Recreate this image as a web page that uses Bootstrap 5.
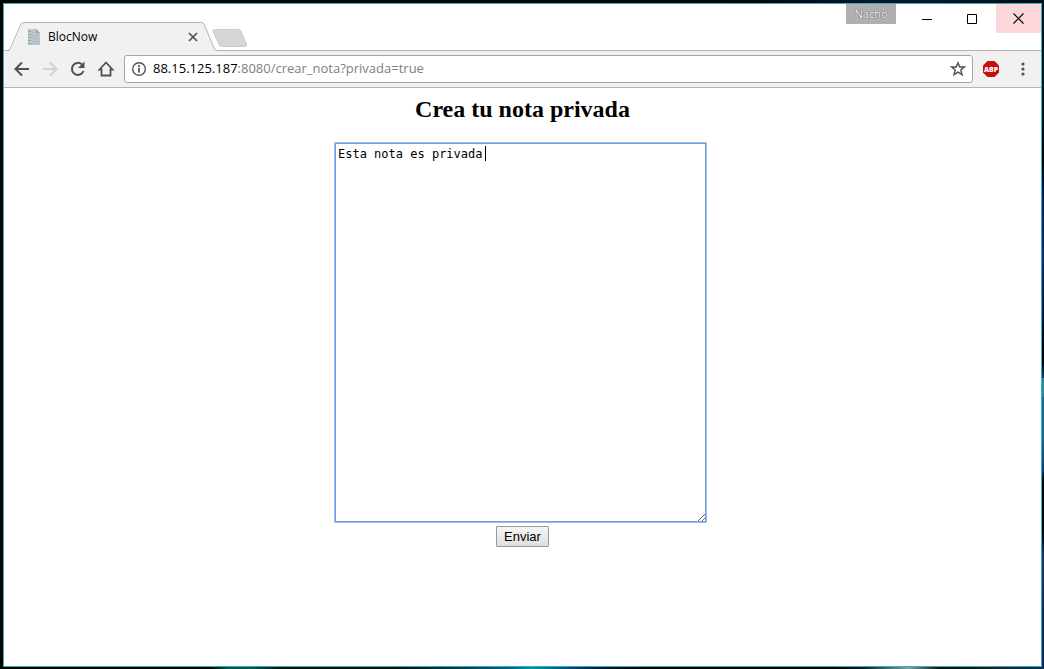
<!DOCTYPE html>
<html lang="es">
<head>
<meta charset="utf-8">
<meta name="viewport" content="width=device-width, initial-scale=1">
<title>BlocNow</title>
<link href="https://cdn.jsdelivr.net/npm/bootstrap@5.3.0/dist/css/bootstrap.min.css" rel="stylesheet">
<style>
  body { font-family: "Open Sans", "Noto Sans", sans-serif; color: #000; }
  .desktop {
    padding: 3px 2px 2px 3px;
    background:
      linear-gradient(90deg, #000 0 20%, #04584f 22% 24%, #001014 27% 38%, #043a4c 44%, #075f8c 49%, #0a92a8 51%, #083a78 55%, #031530 58%, #000 62% 80%, #123 83%, #7ba6ac 87%, #111 90%, #1a2028 95%, #0b2d52) bottom / 100% 2px no-repeat,
      linear-gradient(180deg, #03141f 0 30%, #000 42%, #0c1c55 52%, #15286a 68%, #0a1640 84%, #000 92% 96%, #1a3e80) right 0 top 0 / 2px 378px no-repeat,
      linear-gradient(180deg, #2b8a9c 0 18px, #1d6793 20px 60px, #173d70 92px, #000 104px 150px, #2a3061 180px, #1b2350 240px, #0b2d52) right 0 top 378px / 2px 100% no-repeat,
      linear-gradient(90deg, #000 0 70%, #05192b 85%, #020c14) #000;
  }
  .app-window { background: #fff; border: 1px solid #35afc1; }
  .tab-strip { height: 47px; border-bottom: 1px solid #b4b4b4; }
  .page-tab { width: 212px; height: 29px; margin-bottom: -1px; padding: 0 18px 0 23px; font-size: 12px; }
  .tab-shape { z-index: 0; }
  .page-tab > :not(.tab-shape) { z-index: 1; position: relative; }
  .plain { border: 0; padding: 0; background: none; display: flex; align-items: center; justify-content: center; color: #505050; }
  .tab-name { margin: 0 auto 0 7px; }
  .new-tab { margin: 0 0 3px -4px; }
  .profile { width: 50px; height: 20px; background: #b0b0b0; color: #fff; font-size: 11px; line-height: 20px; text-align: center; text-shadow: 0 0 1px #444, 0 0 1px #444; }
  .win-btn { width: 46px; height: 29px; color: #000; }
  .win-btn.close-win { width: 45px; background: #fbd6db; }
  .toolbar { height: 37px; background: #f1f1f1; border-bottom: 1px solid #b4b4b4; padding: 0 8px; }
  .nav-btn { width: 20px; height: 28px; }
  .menu-btn { margin-left: 12px; }
  .address { height: 28px; background: #fff; border: 1px solid #a6a6a6; border-radius: 3px; padding: 0 6px; margin: 0 8px 0 8px; }
  .url { font-size: 13px; white-space: nowrap; margin: 0 auto 0 6px; }
  .url span { color: #808080; }
  .title { font: bold 24px/28px "Liberation Serif", serif; margin: 7px 0 19px; }
  .note-wrap { margin-right: 4px; max-width: 100%; }
  .note { display: block; width: 373px; height: 381px; max-width: 100%; border: 1px solid #9cbcf0; border-radius: 1px; box-shadow: inset 0 0 0 1px #729fe0; padding: 4px 3px; font: 12px/15px "DejaVu Sans Mono", monospace; color: #000; outline: 0; }
  .caret { left: 151px; top: 4px; width: 1px; height: 15px; background: #000; }
  .send { width: 53px; height: 21px; margin-top: 3px; padding: 0; border: 1px solid #999; border-radius: 1px; background: linear-gradient(#f6f6f6, #dedede); font: 13px/18px "Liberation Sans", sans-serif; color: #000; }
</style>
</head>
<body>
<div class="desktop min-vh-100 d-flex">
  <div class="app-window flex-grow-1 d-flex flex-column">
    <header>
      <div class="tab-strip d-flex">
        <div class="d-flex align-items-end flex-grow-1">
          <div class="page-tab position-relative d-flex align-items-center">
            <svg class="tab-shape position-absolute top-0 start-0" width="213" height="29" aria-hidden="true"><path d="M5 29Q7 28 8 25L18 2Q19 .5 21 .5H197Q199 .5 200 2L210 26Q211 28.500 213 29Z" fill="#f1f1f1"/><path d="M0 28.500H4Q6 28 7 25L17 2Q18 .5 20 .5H197Q199 .5 200 2L210 26Q211 28.500 213 28.500" fill="none" stroke="#b4b4b4"/></svg>
            <svg width="14" height="16" viewBox="0 0 14 16" aria-hidden="true"><path d="M1 0H9L13 4V16H1Z" fill="#bcc6ca"/><path d="M9 0V4H13Z" fill="#95a5ab"/><path d="M1 2.500H4M1 5.500H4M1 8.500H4M1 11.500H4M1 14.500H4" stroke="#93a3a9"/><path d="M5 3.500H8M5 6.500H11M5 9.500H11M5 12.500H11" stroke="#b0bcc0"/></svg>
            <span class="tab-name">BlocNow</span>
            <button class="plain" type="button" aria-label="Cerrar pestaña"><svg width="10" height="10"><path d="M1 1L9 9M9 1L1 9" stroke="#505050" stroke-width="1.700"/></svg></button>
          </div>
          <button class="plain new-tab" type="button" aria-label="Nueva pestaña"><svg width="36" height="18"><path d="M3 .5H26Q28 .5 29 2L34.500 15Q35 17.500 33 17.500H10Q8 17.500 7 15.500L1 2.500Q.5 .5 3 .5Z" fill="#d6d6d6" stroke="#cdcdcd"/></svg></button>
        </div>
        <div class="d-flex align-items-start">
          <button class="plain profile" type="button">Nacho</button>
          <button class="plain win-btn ms-2" type="button" aria-label="Minimizar"><svg width="10" height="10"><path d="M0 5.500H10" stroke="#000"/></svg></button>
          <button class="plain win-btn" type="button" aria-label="Maximizar"><svg width="12" height="12"><path d="M.5 1.500H9.500V10.500H.5Z" fill="none" stroke="#000"/></svg></button>
          <button class="plain win-btn close-win" type="button" aria-label="Cerrar"><svg width="11" height="11"><path d="M.5 .5L10.500 10.500M10.500 .5L.5 10.500" stroke="#000" stroke-width="1.100"/></svg></button>
        </div>
      </div>
      <div class="toolbar d-flex align-items-center">
        <nav class="d-flex gap-2" aria-label="Navegador">
          <button class="plain nav-btn" type="button" aria-label="Atrás"><svg width="16" height="16"><path d="M15 8H2M8 1.500L1.500 8L8 14.500" fill="none" stroke="#505050" stroke-width="2"/></svg></button>
          <button class="plain nav-btn" type="button" aria-label="Adelante"><svg width="16" height="16"><path d="M1 8H14M8 1.500L14.500 8L8 14.500" fill="none" stroke="#d2d2d2" stroke-width="2"/></svg></button>
          <button class="plain nav-btn" type="button" aria-label="Recargar"><svg width="16" height="16"><path d="M13.500 10A6 6 0 1 1 12 3.500" fill="none" stroke="#505050" stroke-width="2"/><path d="M14.500 .5V7H8Z" fill="#505050"/></svg></button>
          <button class="plain nav-btn" type="button" aria-label="Inicio"><svg width="18" height="18"><path d="M9 2.500L2.500 9.500H4.500V15.500H13.500V9.500H15.500Z" fill="none" stroke="#505050" stroke-width="1.800"/></svg></button>
        </nav>
        <div class="address flex-grow-1 d-flex align-items-center">
          <svg width="16" height="16" aria-hidden="true"><circle cx="8" cy="8" r="6.300" fill="none" stroke="#555" stroke-width="1.400"/><path d="M8 7V11.500M8 4V6" stroke="#555" stroke-width="1.800"/></svg>
          <div class="url">88.15.125.187<span>:8080/crear_nota?privada=true</span></div>
          <button class="plain" type="button" aria-label="Añadir a marcadores"><svg width="16" height="16"><path d="M8 1.800L9.800 6H14.300L10.800 9L12 13.800L8 11.200L4 13.800L5.200 9L1.700 6H6.200Z" fill="none" stroke="#505050" stroke-width="1.400"/></svg></button>
        </div>
        <button class="plain" type="button" aria-label="Adblock Plus"><svg width="20" height="18"><path d="M6.500 1H13.500L18 5.500V12.500L13.500 17H6.500L2 12.500V5.500Z" fill="#c70d0d"/><text x="10" y="12" text-anchor="middle" font-family="Open Sans, sans-serif" font-size="7" font-weight="800" fill="#fff">ABP</text></svg></button>
        <button class="plain nav-btn menu-btn" type="button" aria-label="Menú"><svg width="4" height="14"><g fill="#505050"><circle cx="2" cy="2" r="1.600"/><circle cx="2" cy="7" r="1.600"/><circle cx="2" cy="12" r="1.600"/></g></svg></button>
      </div>
    </header>
    <main class="flex-grow-1">
      <form class="d-flex flex-column align-items-center">
        <h1 class="title"><label for="nota">Crea tu nota privada</label></h1>
        <div class="note-wrap position-relative">
          <textarea class="note" id="nota" spellcheck="false">Esta nota es privada</textarea>
          <span class="caret position-absolute"></span>
        </div>
        <button class="send" type="button">Enviar</button>
      </form>
    </main>
  </div>
</div>
<script src="https://cdn.jsdelivr.net/npm/bootstrap@5.3.0/dist/js/bootstrap.bundle.min.js"></script>
</body>
</html>
